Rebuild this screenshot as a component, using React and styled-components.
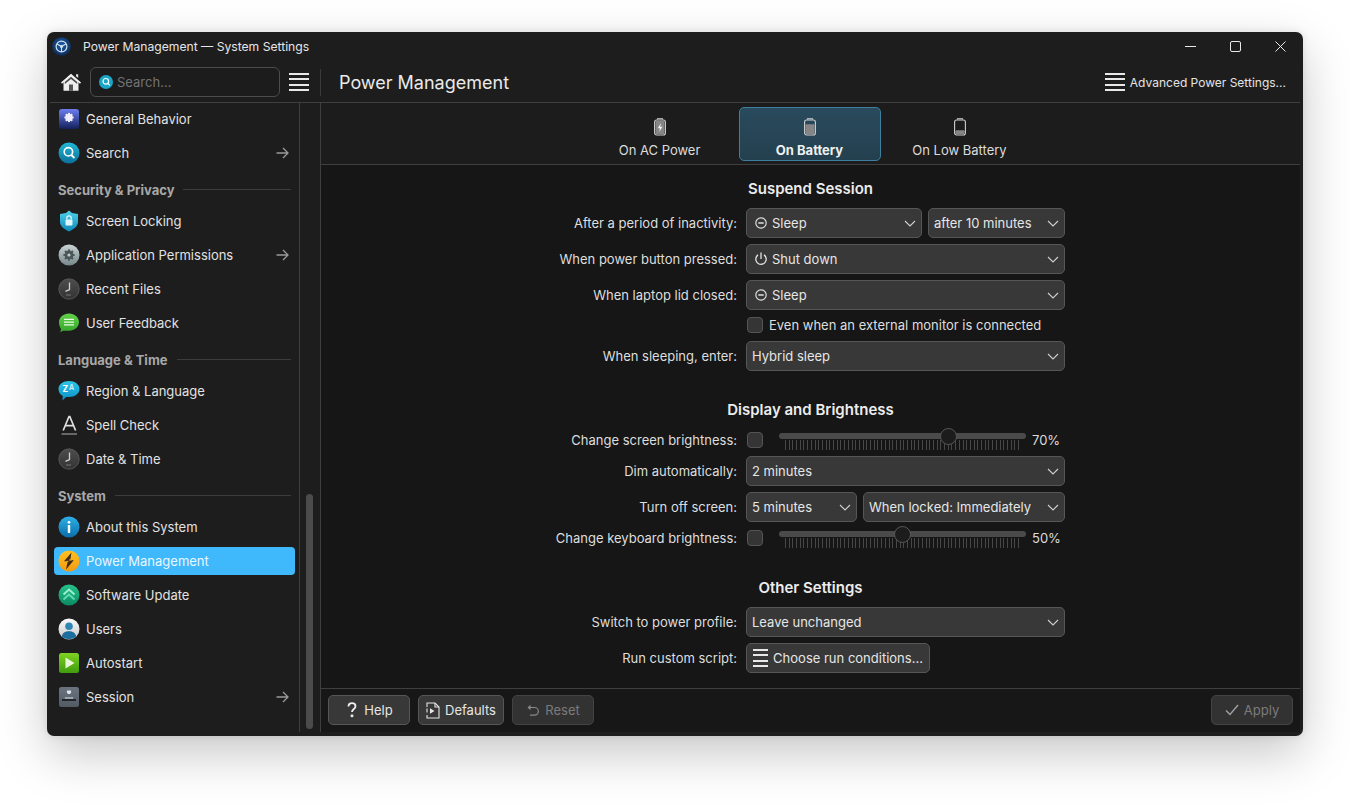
import React, { useId } from "react";
import styled, { createGlobalStyle } from "styled-components";

const Global = createGlobalStyle`
  html, body { margin: 0; padding: 0; background: #fff; }
  body { font-family: Inter, "Noto Sans", sans-serif; font-size: 13px; color: #e4e4e4; width: 1350px; height: 812px; overflow: hidden; }
  * { box-sizing: border-box; }
`;

const Desk = styled.div`
  width: 1350px;
  height: 812px;
  padding: 32px 47px 0;
  background: #fff;
`;
const Win = styled.div`
  width: 1256px;
  height: 704px;
  background: #1d1d1d;
  border-radius: 7px;
  box-shadow: 0 18px 50px rgba(0,0,0,.22), 0 0 8px rgba(0,0,0,.1);
  display: flex;
  flex-direction: column;
  overflow: hidden;
`;
const TitleBar = styled.div`
  height: 29px;
  display: flex;
  align-items: center;
  padding: 0 5px;
  flex: none;
`;
const TitleText = styled.div`
  margin-left: 12px;
  flex: 1;
  color: #e6e6e6;
  font-size: 12.15px;
`;
const WinCtl = styled.button`
  width: 45px;
  height: 29px;
  border: 0;
  background: none;
  padding: 0;
  display: flex;
  align-items: center;
  justify-content: center;
  color: #e8e8e8;
`;
const WinCtls = styled.div`
  display: flex;
  margin-right: -5px;
`;
const Inner = styled.div`
  flex: 1;
  min-height: 0;
  display: flex;
  flex-direction: column;
  padding: 0 3px 4px;
`;
const Header = styled.div`
  height: 42px;
  flex: none;
  display: flex;
  align-items: center;
  border-bottom: 1px solid #3f3f3f;
  padding-top: 1px;
`;
const HeadLeft = styled.div`
  width: 271px;
  height: 27px;
  flex: none;
  display: flex;
  align-items: center;
  padding-left: 11px;
  border-right: 1px solid #3a3a3a;
`;
const SearchBox = styled.div`
  width: 190px;
  height: 30px;
  margin-left: 9px;
  border: 1px solid #4c4c4c;
  border-radius: 6px;
  background: #1c1c1c;
  display: flex;
  align-items: center;
  gap: 4px;
  padding-left: 8px;
  color: #737373;
  font-size: 13px;
  flex: none;
`;
const Burger = styled.div`
  width: ${p => p.$w}px;
  height: 18px;
  flex: none;
  margin-left: ${p => p.$ml || 0}px;
  display: flex;
  flex-direction: column;
  justify-content: space-between;
  & > i { display: block; height: 2px; background: #e8e8e8; }
`;
const PageTitle = styled.div`
  flex: 1;
  margin-left: 18px;
  font-size: 18px;
  color: #eaeaea;
`;
const AdvBtn = styled.div`
  display: flex;
  align-items: center;
  gap: 5px;
  margin-right: 14px;
  color: #e4e4e4;
  font-size: 12px;
`;
const Body = styled.div`
  flex: 1;
  min-height: 0;
  display: flex;
`;
const Sidebar = styled.div`
  width: 250px;
  flex: none;
  border-right: 1px solid #3f3f3f;
  padding: 0 4px;
`;
const NavList = styled.div`
  display: flex;
  flex-direction: column;
  margin-top: -1px;
`;
const ScrollCol = styled.div`
  width: 21px;
  flex: none;
  border-right: 1px solid #3f3f3f;
  display: flex;
  flex-direction: column;
  justify-content: flex-end;
  align-items: center;
  padding: 0 0 3px;
`;
const Thumb = styled.div`
  width: 7px;
  height: 235px;
  border-radius: 4px;
  background: #4b4b4b;
  margin-right: 1px;
`;
const Item = styled.div`
  height: 28px;
  flex: none;
  margin: 3px 0;
  display: flex;
  align-items: center;
  padding: 0 6px 0 4px;
  gap: 6px;
  border-radius: 4px;
  font-size: 13px;
  color: ${p => (p.$active ? "#e9f6ff" : "#e2e2e2")};
  background: ${p => (p.$active ? "#3fb9fb" : "transparent")};
  & > span { flex: 1; }
`;
const Sec = styled.div`
  height: 34px;
  flex: none;
  padding: 13px 4px 0;
  display: flex;
  align-items: flex-start;
  gap: 9px;
  font-weight: 700;
  font-size: 13px;
  line-height: 14px;
  color: #a8a8a8;
  &::after { content: ""; flex: 1; height: 1px; background: #3c3c3c; margin-top: 6px; }
`;
const Main = styled.div`
  flex: 1;
  min-width: 0;
  display: flex;
  flex-direction: column;
`;
const Tabs = styled.div`
  height: 62px;
  flex: none;
  padding: 4px 2px 0 0;
  display: flex;
  justify-content: center;
  gap: 8px;
  border-bottom: 1px solid #3f3f3f;
  background: #1c1c1c;
`;
const Tab = styled.div`
  width: 142px;
  height: 54px;
  border-radius: 5px;
  display: flex;
  flex-direction: column;
  align-items: center;
  padding-top: 10px;
  gap: 6px;
  font-size: 13px;
  line-height: 16px;
  color: ${p => (p.$on ? "#f0f0f0" : "#dcdcdc")};
  font-weight: ${p => (p.$on ? 700 : 400)};
  border: 1px solid ${p => (p.$on ? "#3e7f9f" : "transparent")};
  background: ${p => (p.$on ? "linear-gradient(#294a5d,#24404f)" : "transparent")};
`;
const Content = styled.div`
  flex: 1;
  min-height: 0;
  background: #161616;
  display: flex;
  flex-direction: column;
  align-items: center;
`;
const Heading = styled.div`
  height: 24px;
  line-height: 26px;
  margin: ${p => p.$top}px 0 8px;
  font-size: 15px;
  font-weight: 600;
  color: #ececec;
  text-align: center;
`;
const Form = styled.div`
  width: 605px;
  display: grid;
  grid-template-columns: 229px 367px;
  column-gap: 9px;
  row-gap: 6px;
  align-items: center;
`;
const Label = styled.div`
  text-align: right;
  color: #dedede;
  font-size: 13px;
`;
const Field = styled.div`
  display: flex;
  gap: 6px;
  align-items: center;
  min-width: 0;
  height: ${p => p.$h || 30}px;
  padding-bottom: ${p => p.$pb || 0}px;
`;
const Combo = styled.div`
  width: ${p => p.$w}px;
  height: 30px;
  flex: none;
  border: 1px solid #565656;
  border-radius: 5px;
  background: #383838;
  display: flex;
  align-items: center;
  padding: 0 5px;
  gap: 4px;
  color: #e6e6e6;
  font-size: 13px;
  & > span { flex: 1; white-space: nowrap; }
  & > svg:first-child:not(:last-child) { margin: 0 1px 0 3px; }
`;
const Check = styled.div`
  width: 16px;
  height: 16px;
  margin-left: 1px;
  flex: none;
  border: 1px solid #555;
  border-radius: 4px;
  background: #353535;
`;
const CheckText = styled.span`
  color: #dedede;
`;
const SliderWrap = styled.div`
  width: 247px;
  height: 20px;
  margin-left: 10px;
  position: relative;
  flex: none;
`;
const Track = styled.div`
  position: absolute;
  left: 0; right: 0; top: 3px;
  height: 6px;
  border-radius: 3px;
  background: #4a4a4a;
`;
const Handle = styled.div`
  position: absolute;
  top: -2px;
  width: 17px;
  height: 17px;
  margin-left: -8.5px;
  border-radius: 50%;
  background: #1c1c1c;
  border: 1px solid #585858;
`;
const Ticks = styled.svg`
  position: absolute;
  left: 6px;
  top: 10px;
`;
const Pct = styled.div`
  width: 28px;
  color: #dcdcdc;
  white-space: nowrap;
`;
const Button = styled.div`
  height: 30px;
  flex: none;
  width: ${p => p.$w}px;
  border: 1px solid ${p => (p.$off ? "#434343" : "#565656")};
  border-radius: 5px;
  background: ${p => (p.$off ? "#323232" : "#383838")};
  color: ${p => (p.$off ? "#7b7b7b" : "#e6e6e6")};
  display: flex;
  align-items: center;
  justify-content: center;
  gap: 5px;
  font-size: 13px;
`;
const Footer = styled.div`
  height: 44px;
  flex: none;
  border-top: 1px solid #3f3f3f;
  padding: 6px 7px 0;
  display: flex;
  gap: 8px;
  background: #171717;
`;
const Spacer = styled.div`flex: 1;`;

/* ---------- drawings ---------- */
const Chevron = () => (
  <svg width="12" height="7" viewBox="0 0 12 7" fill="none" stroke="#cfcfcf" strokeWidth="1.1"><path d="M1 1l5 5 5-5" /></svg>
);
const Arrow = () => (
  <svg width="13" height="12" viewBox="0 0 13 12" fill="none" stroke="#9a9a9a" strokeWidth="1.3"><path d="M0.5 6h11.5M7 1l5 5-5 5" /></svg>
);
const Lines = ({ w, ml }) => <Burger $w={w} $ml={ml}><i /><i /><i /><i /></Burger>;
const SleepIco = () => (
  <svg width="12" height="12" viewBox="0 0 12 12" fill="none" stroke="#dedede" strokeWidth="1.2"><circle cx="6" cy="6" r="5.2" /><path d="M3.300 6h5.400" strokeWidth="1.5" /></svg>
);
const PowerIco = () => (
  <svg width="12" height="14" viewBox="0 0 12 14" fill="none" stroke="#e2e2e2" strokeWidth="1.3"><path d="M6 .5v6.500" /><path d="M3 2.900a5.200 5.200 0 1 0 6 0" /></svg>
);
const HomeIco = () => (
  <svg width="20" height="20" viewBox="0 0 20 20">
    <path d="M2.500 9.500V18.800h15V9.500L10 3z" fill="#eee" />
    <path d="M0 10.600L10 1.800l10 8.800-1 1.100L10 4 1 11.700z" fill="#f4f4f4" />
    <path d="M15 2.200h2.200v3.800L15 4.200z" fill="#ddd" />
    <path d="M3.800 10L10 4.800 16.200 10v2L10 7 3.800 12z" fill="#4a4a4a" />
    <rect x="8" y="12.500" width="4" height="6.300" fill="#555" />
  </svg>
);
const Batt = ({ level, bolt }) => (
  <svg width="14" height="18" viewBox="0 0 14 18" fill="none">
    <path d="M4.500 1.500V.8h5v.7" stroke="#cfcfcf" strokeWidth="1.100" />
    <rect x="1.600" y="2" width="10.800" height="15" rx="2" stroke="#cfcfcf" strokeWidth="1.100" />
    <rect x="2.400" y={16.300 - level} width="9.200" height={level} rx="1" fill="#868686" />
    {bolt && <path d="M8 5L4.800 10.200h2.200L6.200 14 9.400 8.800H7.200z" fill="#f0f0f0" />}
  </svg>
);
const AppIcon = ({ kind }) => {
  const id = useId();
  const g = (a, b) => (
    <defs><linearGradient id={id} x1="0" y1="0" x2="0" y2="1"><stop offset="0" stopColor={a} /><stop offset="1" stopColor={b} /></linearGradient></defs>
  );
  const fill = `url(#${id})`;
  const common = { width: 22, height: 22, viewBox: "0 0 22 22", style: { flex: "none" } };
  const gear = (cx, cy, r, col) => (
    <g>
      <circle cx={cx} cy={cy} r={r} fill="none" stroke={col} strokeWidth={r * 0.75} />
      {[0, 45, 90, 135].map(a => (
        <rect key={a} x={cx - 1} y={cy - r * 1.75} width="2" height={r * 3.5} fill={col} transform={`rotate(${a} ${cx} ${cy})`} />
      ))}
    </g>
  );
  switch (kind) {
    case "general":
      return (<svg {...common}>{g("#6c7ef0", "#12205a")}<rect x="1" y="1" width="20" height="20" rx="3" fill={fill} />{gear(11, 9.500, 2.600, "#eef")}</svg>);
    case "search":
      return (<svg {...common}>{g("#1fb9d6", "#0c6f9a")}<circle cx="11" cy="11" r="10.500" fill={fill} /><circle cx="10.400" cy="9.800" r="4.200" fill="none" stroke="#fff" strokeWidth="1.600" /><path d="M13.400 13l3 3" stroke="#fff" strokeWidth="1.800" /></svg>);
    case "lock":
      return (<svg {...common}>{g("#4fd2ec", "#0e88b8")}<path d="M11 .6l3 2.300 6 1v8c0 4.300-4.800 7.600-9 9.500-4.200-1.900-9-5.200-9-9.500v-8l6-1z" fill={fill} /><rect x="7.500" y="9.500" width="7" height="6" rx="1" fill="#dff6fc" /><path d="M8.800 9.500V8a2.200 2.200 0 0 1 4.400 0v1.500" fill="none" stroke="#dff6fc" strokeWidth="1.300" /></svg>);
    case "perm":
      return (<svg {...common}>{g("#c9d4d6", "#76868a")}<circle cx="11" cy="11" r="10.500" fill={fill} />{gear(11, 11, 3.200, "#4b5659")}<circle cx="11" cy="11" r="1.600" fill="#c0cbcd" /></svg>);
    case "clock":
      return (<svg {...common}>{g("#4d4d4d", "#333")}<circle cx="11" cy="11" r="10.200" fill={fill} stroke="#5e5e5e" strokeWidth=".8" /><path d="M11.500 4.500v7l-4 1.800" fill="none" stroke="#d0d0d0" strokeWidth="1.300" /><path d="M8 17h5" stroke="#777" strokeWidth="1" /></svg>);
    case "chat":
      return (<svg {...common}>{g("#62d14a", "#35a52a")}<path d="M11 1.500c5.500 0 10 3.700 10 8.600s-4.500 8.600-10 8.600H5l-2.600 1.600.6-3.400C1.800 15.300 1 12.800 1 10.100 1 5.200 5.500 1.500 11 1.500z" fill={fill} /><path d="M6 7.300h10M6 10.100h10M6 12.900h10" stroke="#e9fbe5" strokeWidth="1.200" /></svg>);
    case "region":
      return (<svg {...common}>{g("#2fc6e8", "#0b8fc6")}<path d="M11 1c5.800 0 10.500 3.400 10.500 8s-4.700 8-10.500 8H8l-3.500 3.500.3-4.400C2.200 14.700.5 12.100.5 9 .5 4.400 5.200 1 11 1z" fill={fill} /><text x="4.600" y="11.500" fontSize="8.500" fontWeight="700" fill="#fff" fontFamily="Inter, sans-serif">Z</text><text x="11" y="9.500" fontSize="7" fontWeight="600" fill="#d8f3fb" fontFamily="Inter, sans-serif">A</text></svg>);
    case "spell":
      return (<svg {...common}><path d="M5.200 16.500L11 2.500h.8l5.800 14M7.200 11.700h8.500" fill="none" stroke="#e0e0e0" strokeWidth="1.700" /><path d="M3.500 20h15.500" stroke="#9a9a9a" strokeWidth="1.200" /></svg>);
    case "info":
      return (<svg {...common}>{g("#2db0e6", "#0b6eaa")}<circle cx="11" cy="11" r="10.500" fill={fill} /><circle cx="11" cy="6.300" r="1.400" fill="#fff" /><rect x="9.800" y="9" width="2.400" height="8" rx=".6" fill="#fff" /></svg>);
    case "power":
      return (<svg {...common}>{g("#ffc21f", "#f39a12")}<circle cx="11" cy="11" r="10.500" fill={fill} /><path d="M13.500 2.500L6 11.300h3.700L8 19.500l7.800-9.300h-3.600z" fill="#3c2c18" /><path d="M8.500 11.300h2M11 10h2.500" stroke="#f7b52a" strokeWidth=".9" /></svg>);
    case "update":
      return (<svg {...common}>{g("#27c28c", "#0c8a63")}<circle cx="11" cy="11" r="10.500" fill={fill} /><path d="M5.500 10.500L11 5.500l5.500 5" fill="none" stroke="#9af0cf" strokeWidth="2" /><path d="M5.500 15.500L11 10.500l5.500 5" fill="none" stroke="#5fdcb0" strokeWidth="2" /></svg>);
    case "user":
      return (<svg {...common}>{g("#fafafa", "#c9c9c9")}<circle cx="11" cy="11" r="10.500" fill={fill} /><circle cx="11" cy="8.300" r="3.800" fill="#2f86b5" /><path d="M3.800 18.500c.6-3.500 3.300-5.300 7.200-5.300s6.600 1.800 7.200 5.300A10 10 0 0 1 11 21a10 10 0 0 1-7.200-2.500z" fill="#1d6e9e" /></svg>);
    case "auto":
      return (<svg {...common}>{g("#7fd321", "#3f9c0c")}<rect x="1" y="1" width="20" height="20" rx="2.500" fill={fill} /><path d="M7.500 5.500v11l9-5.500z" fill="#e9f7d8" /></svg>);
    case "session":
      return (<svg {...common}>{g("#6a7480", "#525a64")}<rect x="1" y="1" width="20" height="20" rx="2.500" fill={fill} /><path d="M11 4.500l1.800 0a2.200 2.200 0 1 1-3.600 0zM6.800 11.500h8.400v1H6.800z" fill="#e2e5e8" /><rect x="4" y="13" width="14" height="2" fill="#22262a" /></svg>);
    default:
      return null;
  }
};
const TITLE_LOGO = (
  <svg width="19" height="19" viewBox="0 0 19 19" fill="none" style={{ flex: "none" }}>
    <defs><radialGradient id="tl" cx=".5" cy=".4" r=".6"><stop offset="0" stopColor="#1c5ea8" /><stop offset="1" stopColor="#0d2c5a" /></radialGradient></defs>
    <circle cx="9.500" cy="9.500" r="9.300" fill="url(#tl)" />
    <circle cx="9.500" cy="9.500" r="5.400" stroke="#d4e2ee" strokeWidth="1.200" />
    <path d="M9.500 9.500L5 7M9.500 9.500L14 7M9.500 9.500V15" stroke="#d4e2ee" strokeWidth="1.100" />
    <circle cx="9.500" cy="9.500" r="1.500" fill="#d4e2ee" />
  </svg>
);

const TickMarks = () => {
  const n = 64;
  const w = 234;
  return (
    <Ticks width={w} height="10" viewBox={`0 0 ${w} 10`}>
      {Array.from({ length: n }, (_, i) => {
        const x = Math.round((i * (w - 1)) / (n - 1)) + 0.5;
        return <line key={i} x1={x} x2={x} y1="0" y2="10" stroke="#484848" strokeWidth="1" />;
      })}
    </Ticks>
  );
};
const Slider = ({ value, label, h }) => (
  <Field $h={h}>
    <Check />
    <SliderWrap>
      <Track />
      <TickMarks />
      <Handle style={{ left: `${value}%` }} />
    </SliderWrap>
    <Pct>{label}</Pct>
  </Field>
);
const Select = ({ w, icon, children }) => (
  <Combo $w={w}>{icon}<span>{children}</span><Chevron /></Combo>
);

const group = (name, items) => ({ name, items });
const nav = [
  group(null, [["general", "General Behavior"], ["search", "Search", 1]]),
  group("Security & Privacy", [["lock", "Screen Locking"], ["perm", "Application Permissions", 1], ["clock", "Recent Files"], ["chat", "User Feedback"]]),
  group("Language & Time", [["region", "Region & Language"], ["spell", "Spell Check"], ["clock", "Date & Time"]]),
  group("System", [["info", "About this System"], ["power", "Power Management", 0, 1], ["update", "Software Update"], ["user", "Users"], ["auto", "Autostart"], ["session", "Session", 1]]),
];

export default function App() {
  return (
    <>
      <Global />
      <Desk>
        <Win>
          <TitleBar>
            {TITLE_LOGO}
            <TitleText>Power Management — System Settings</TitleText>
            <WinCtls>
              <WinCtl><svg width="11" height="11" fill="none" stroke="currentColor"><path d="M0 5.500h11" /></svg></WinCtl>
              <WinCtl><svg width="11" height="11" fill="none" stroke="currentColor"><rect x=".5" y=".5" width="10" height="10" rx="1.500" /></svg></WinCtl>
              <WinCtl><svg width="11" height="11" fill="none" stroke="currentColor"><path d="M.5.500l10 10M10.500.500l-10 10" /></svg></WinCtl>
            </WinCtls>
          </TitleBar>
          <Inner>
            <Header>
              <HeadLeft>
                <HomeIco />
                <SearchBox>
                  <svg width="14" height="14" viewBox="0 0 14 14"><circle cx="7" cy="7" r="7" fill="#1aa6c6" /><circle cx="6.800" cy="6.300" r="2.800" fill="none" stroke="#fff" strokeWidth="1.200" /><path d="M8.800 8.300l2 2" stroke="#fff" strokeWidth="1.200" /></svg>
                  Search...
                </SearchBox>
                <Lines w={20} ml={9} />
              </HeadLeft>
              <PageTitle>Power Management</PageTitle>
              <AdvBtn><Lines w={20} />Advanced Power Settings...</AdvBtn>
            </Header>
            <Body>
              <Sidebar>
                <NavList>
                  {nav.map(g => (
                    <React.Fragment key={g.name || "top"}>
                      {g.name && <Sec>{g.name}</Sec>}
                      {g.items.map(([k, t, arrow, active]) => (
                        <Item key={t} $active={active}>
                          <AppIcon kind={k} />
                          <span>{t}</span>
                          {arrow ? <Arrow /> : null}
                        </Item>
                      ))}
                    </React.Fragment>
                  ))}
                </NavList>
              </Sidebar>
              <ScrollCol><Thumb /></ScrollCol>
              <Main>
                <Tabs>
                  <Tab><Batt level={13.500} bolt />On AC Power</Tab>
                  <Tab $on><Batt level={10} />On Battery</Tab>
                  <Tab><Batt level={4} />On Low Battery</Tab>
                </Tabs>
                <Content>
                  <Heading $top={11}>Suspend Session</Heading>
                  <Form>
                    <Label>After a period of inactivity:</Label>
                    <Field><Select w={176} icon={<SleepIco />}>Sleep</Select><Select w={137}>after 10 minutes</Select></Field>
                    <Label>When power button pressed:</Label>
                    <Field><Select w={319} icon={<PowerIco />}>Shut down</Select></Field>
                    <Label>When laptop lid closed:</Label>
                    <Field><Select w={319} icon={<SleepIco />}>Sleep</Select></Field>
                    <span />
                    <Field $h={19} $pb={2}><Check /><CheckText>Even when an external monitor is connected</CheckText></Field>
                    <Label>When sleeping, enter:</Label>
                    <Field><Select w={319}>Hybrid sleep</Select></Field>
                  </Form>
                  <Heading $top={26}>Display and Brightness</Heading>
                  <Form>
                    <Label>Change screen brightness:</Label>
                    <Slider value={68.500} label="70%" h={21} />
                    <Label>Dim automatically:</Label>
                    <Field><Select w={319}>2 minutes</Select></Field>
                    <Label>Turn off screen:</Label>
                    <Field><Select w={111}>5 minutes</Select><Select w={202}>When locked: Immediately</Select></Field>
                    <Label>Change keyboard brightness:</Label>
                    <Slider value={50} label="50%" h={20} />
                  </Form>
                  <Heading $top={27}>Other Settings</Heading>
                  <Form>
                    <Label>Switch to power profile:</Label>
                    <Field><Select w={319}>Leave unchanged</Select></Field>
                    <Label>Run custom script:</Label>
                    <Field><Button $w={184}><Lines w={15} />Choose run conditions...</Button></Field>
                  </Form>
                </Content>
                <Footer>
                  <Button $w={82}>
                    <svg width="14" height="16" viewBox="0 0 14 16" fill="none" stroke="#eee" strokeWidth="1.800"><path d="M3.500 4.500C3.500 2.500 5 1.200 7 1.200s3.500 1.300 3.500 3.100c0 2.600-3.500 2.800-3.500 5.700" /><circle cx="7" cy="13.800" r=".6" fill="#eee" /></svg>
                    Help
                  </Button>
                  <Button $w={86}>
                    <svg width="14" height="17" viewBox="0 0 14 17" fill="none" stroke="#e6e6e6" strokeWidth="1.100"><path d="M1 5V1h8l4 4v11H1v-3" /><path d="M9 1v4h4" /><path d="M1 6.500v4" /><path d="M4 6.200v5.600L8.500 9z" fill="#e6e6e6" stroke="none" /></svg>
                    Defaults
                  </Button>
                  <Button $w={82} $off>
                    <svg width="14" height="13" viewBox="0 0 14 13" fill="none" stroke="#8a8a8a" strokeWidth="1.200"><path d="M3 3.500h5.500a3.800 3.800 0 0 1 0 7.700H4" /><path d="M4.500 .8L1.500 3.500l3 2.700z" fill="#8a8a8a" stroke="none" /></svg>
                    Reset
                  </Button>
                  <Spacer />
                  <Button $w={82} $off>
                    <svg width="14" height="12" viewBox="0 0 14 12" fill="none" stroke="#a0a0a0" strokeWidth="1.400"><path d="M1 6.500L5 10.500 13 1" /></svg>
                    Apply
                  </Button>
                </Footer>
              </Main>
            </Body>
          </Inner>
        </Win>
      </Desk>
    </>
  );
}
